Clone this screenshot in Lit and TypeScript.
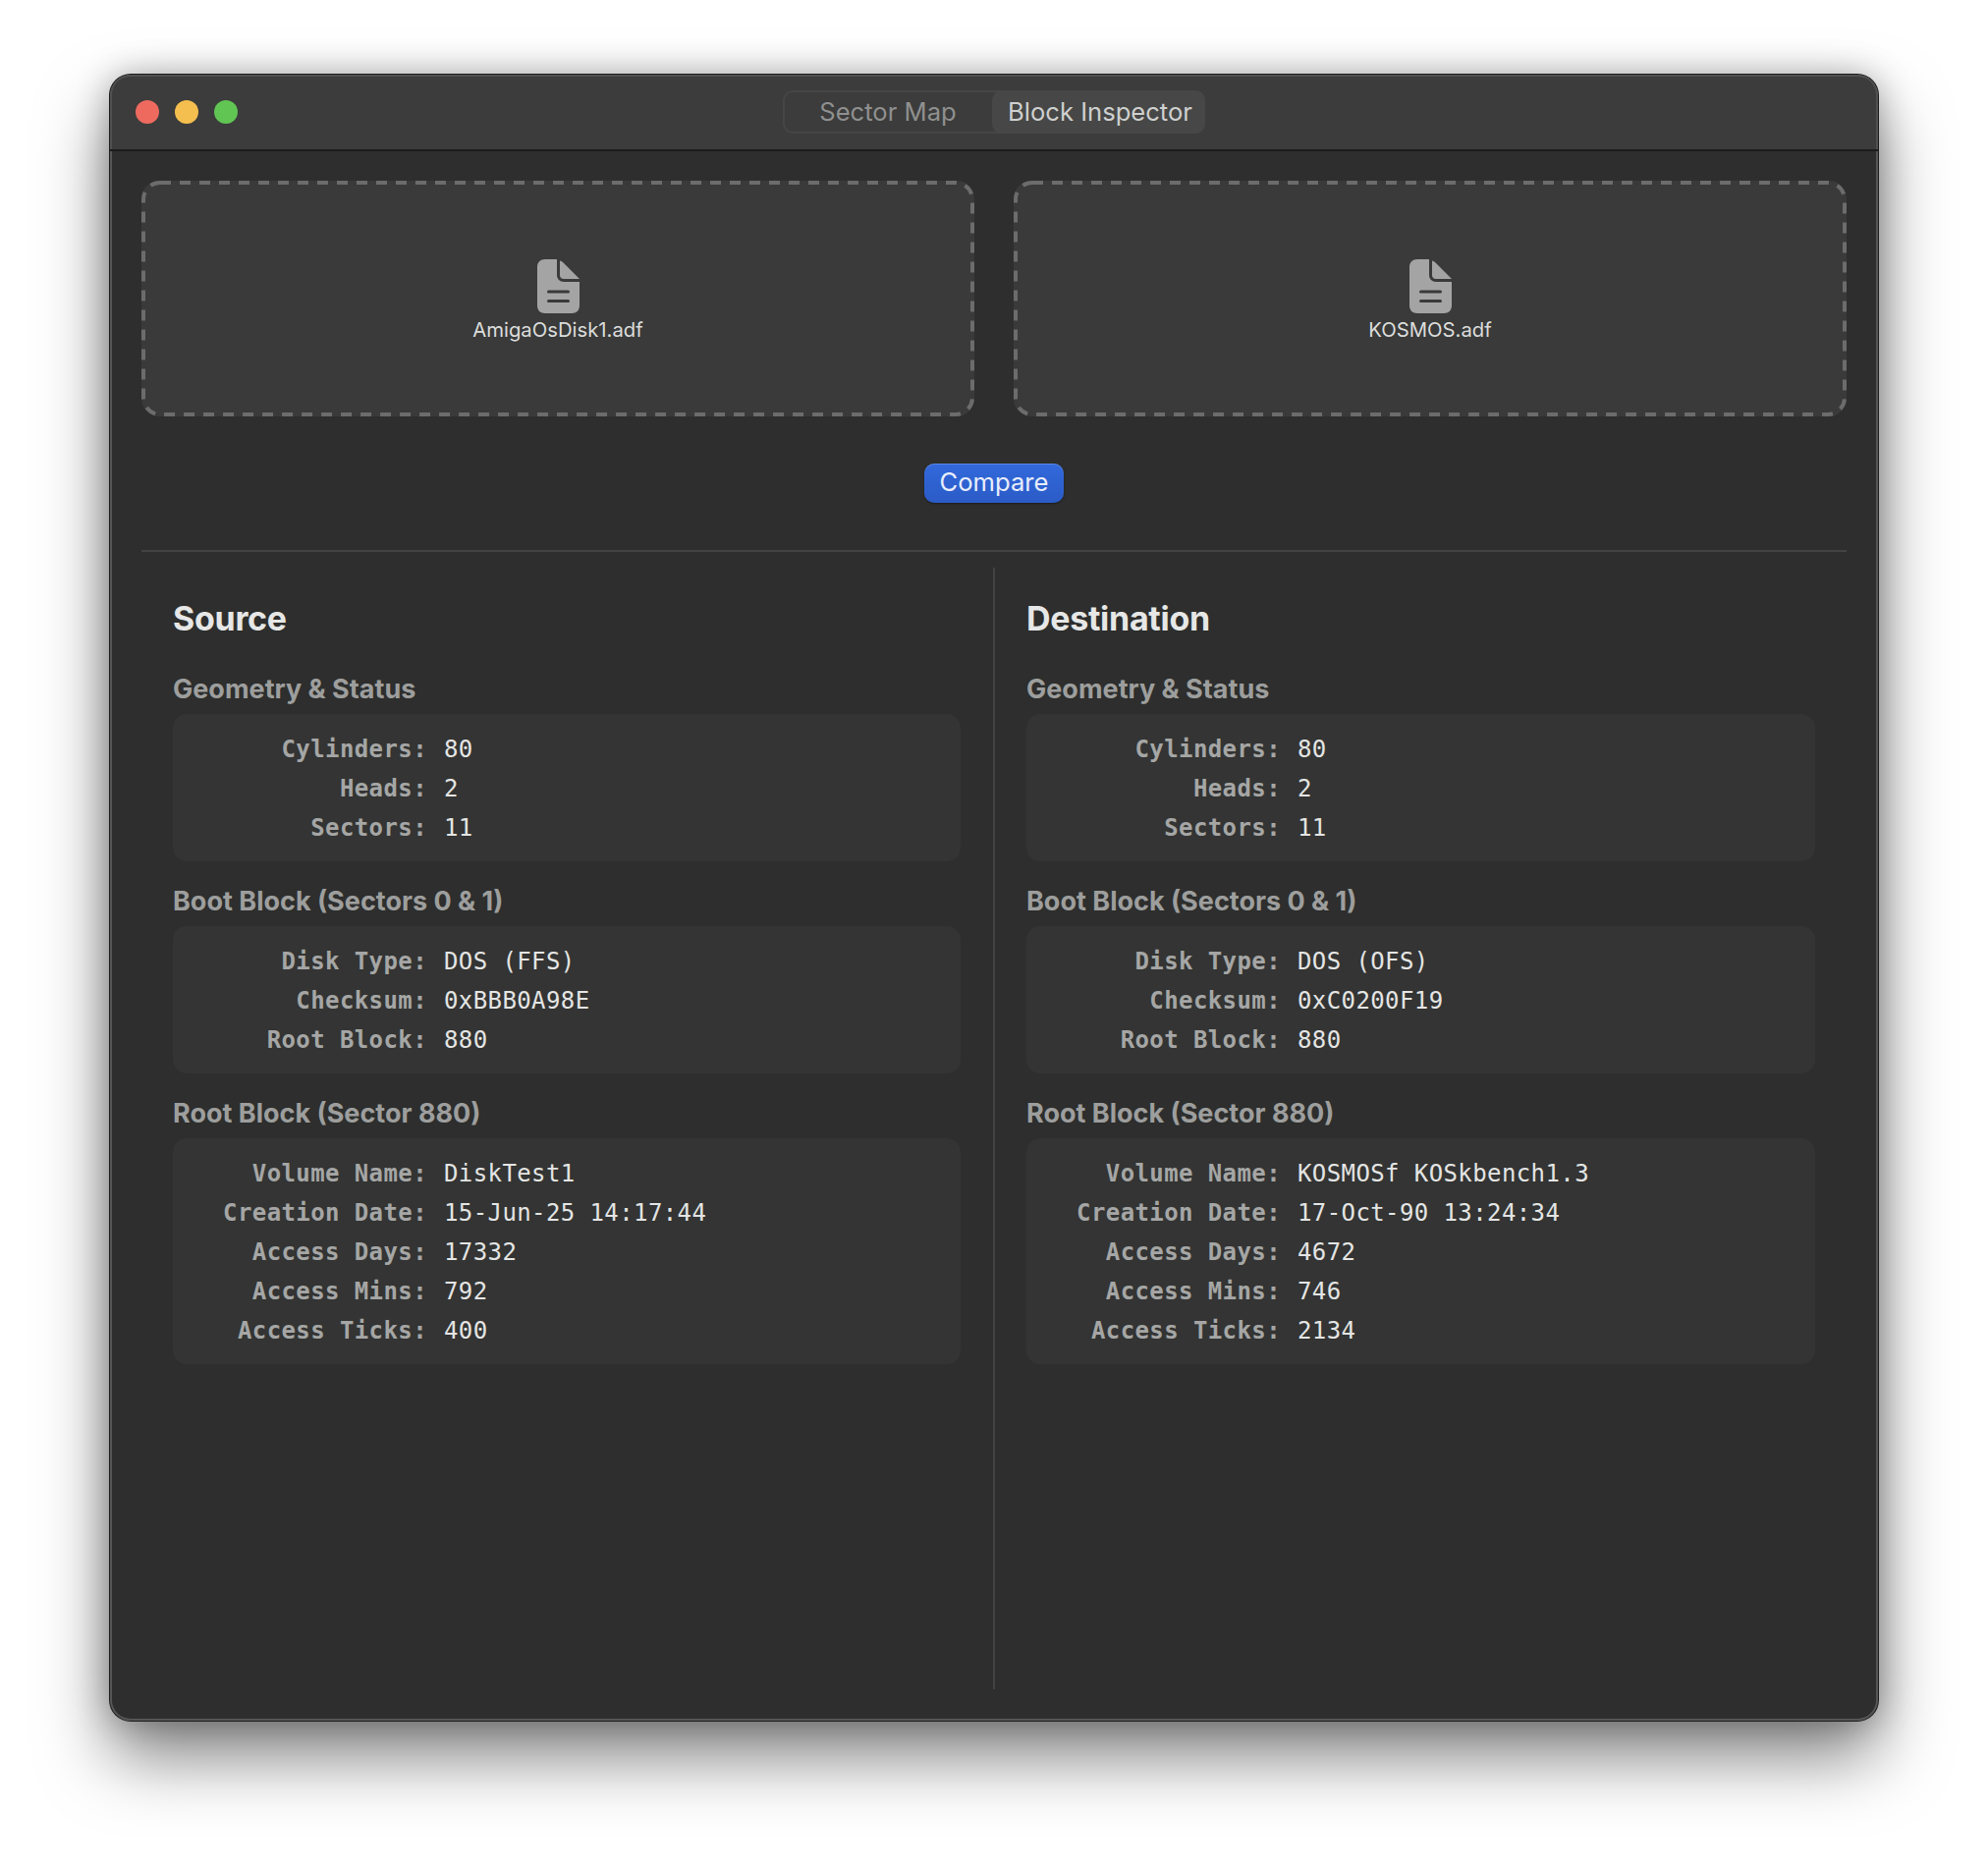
import {css, html, LitElement} from 'lit'
import {customElement} from 'lit/decorators.js'

type Row = [string, string]
type Section = {title: string; rows: Row[]}

const SOURCE: Section[] = [
  {title: 'Geometry & Status', rows: [['Cylinders:', '80'], ['Heads:', '2'], ['Sectors:', '11']]},
  {title: 'Boot Block (Sectors 0 & 1)', rows: [['Disk Type:', 'DOS (FFS)'], ['Checksum:', '0xBBB0A98E'], ['Root Block:', '880']]},
  {
    title: 'Root Block (Sector 880)',
    rows: [
      ['Volume Name:', 'DiskTest1'],
      ['Creation Date:', '15-Jun-25 14:17:44'],
      ['Access Days:', '17332'],
      ['Access Mins:', '792'],
      ['Access Ticks:', '400'],
    ],
  },
]

const DESTINATION: Section[] = [
  {title: 'Geometry & Status', rows: [['Cylinders:', '80'], ['Heads:', '2'], ['Sectors:', '11']]},
  {title: 'Boot Block (Sectors 0 & 1)', rows: [['Disk Type:', 'DOS (OFS)'], ['Checksum:', '0xC0200F19'], ['Root Block:', '880']]},
  {
    title: 'Root Block (Sector 880)',
    rows: [
      ['Volume Name:', 'KOSMOSf KOSkbench1.3'],
      ['Creation Date:', '17-Oct-90 13:24:34'],
      ['Access Days:', '4672'],
      ['Access Mins:', '746'],
      ['Access Ticks:', '2134'],
    ],
  },
]

const fileIcon = html`
  <svg class="file-icon" width="43" height="55" viewBox="0 0 43 55">
    <path fill="#a3a4a3" fill-rule="evenodd" d="M8 0H20V16C20 20 23 23 27 23H43V47C43 52 40 55 35 55H8C3 55 0 52 0 47V8C0 3 3 0 8 0ZM11.500 31.500A1.500 1.500 0 0 0 11.500 34.500H31.500A1.500 1.500 0 0 0 31.500 31.500ZM11.500 41A1.500 1.500 0 0 0 11.500 44H31.500A1.500 1.500 0 0 0 31.500 41Z" />
    <path fill="#a3a4a3" d="M23 1.500C24 1.500 25 2 26 3L41 18C42 19 42.500 19.500 43 20H27C24.500 20 23 18.500 23 16Z" />
  </svg>`

const dashes = html`
  <svg class="dashes"><rect class="dash-rect" x="2" y="2" rx="17" ry="17"></rect></svg>`

@customElement('app-root')
export class AppRoot extends LitElement {
  static styles = css`
    :host {
      background: #fff;
      box-sizing: border-box;
      display: block;
      font-family: Inter, "Liberation Sans", sans-serif;
      height: 1900px;
      overflow: hidden;
      padding: 76px 112px 0;
      width: 2024px;
    }

    .window {
      background: #2d2e2d;
      border-radius: 21px;
      box-shadow: 0 0 0 1px #1c1c1c, inset 0 0 0 2px #555655, 0 36px 70px rgba(0, 0, 0, 0.5), 0 0 34px rgba(0, 0, 0, 0.28);
      box-sizing: border-box;
      display: flex;
      flex-direction: column;
      height: 1676px;
      overflow: hidden;
      width: 1800px;
    }

    .titlebar {
      align-items: center;
      background: #3b3c3b;
      border-bottom: 2px solid #1b1c1b;
      border-radius: 21px 21px 0 0;
      box-shadow: inset 0 2px 0 #4f504f, inset 2px 0 0 #4f504f, inset -2px 0 0 #4f504f;
      display: grid;
      flex: none;
      grid-template-columns: 1fr auto 1fr;
      height: 76px;
      padding: 0 26px;
    }

    .lights {
      display: flex;
      gap: 16px;
    }

    .light {
      border-radius: 50%;
      height: 24px;
      width: 24px;
    }

    .red { background: #ee6a5f; }
    .yellow { background: #f5bf4f; }
    .green { background: #61c554; }

    .segments {
      border: 2px solid #454645;
      border-radius: 10px;
      box-sizing: border-box;
      display: grid;
      font-size: 25.6px;
      grid-template-columns: 1fr 1fr;
      height: 44px;
      width: 430px;
    }

    .segment {
      align-items: center;
      color: #8f908f;
      display: flex;
      justify-content: center;
      margin: -2px;
      padding: 0 3px 2px 0;
    }

    .segment.active {
      background: #464746;
      border-radius: 10px;
      color: #cfd0cf;
      padding: 0 0 2px 3px;
    }

    .body {
      display: flex;
      flex: 1;
      flex-direction: column;
      min-height: 0;
      padding: 30px 32px 32px;
    }

    .drops {
      display: grid;
      gap: 40px;
      grid-template-columns: 1fr 1fr;
    }

    .drop {
      align-items: center;
      background: #393a39;
      border-radius: 18px;
      box-sizing: border-box;
      display: flex;
      flex-direction: column;
      height: 240px;
      padding-top: 80px;
      position: relative;
    }

    .dashes {
      height: 100%;
      left: 0;
      position: absolute;
      top: 0;
      width: 100%;
    }

    .dash-rect {
      fill: none;
      height: calc(100% - 4px);
      stroke: #6b6c6b;
      stroke-dasharray: 11 9;
      stroke-width: 4;
      width: calc(100% - 4px);
    }

    .file-icon {
      display: block;
    }

    .file-name {
      color: #dcdddc;
      font-size: 20.3px;
      line-height: 26px;
      margin-top: 4px;
    }

    .actions {
      display: flex;
      justify-content: center;
      padding: 48px 0;
    }

    .compare {
      background: linear-gradient(#3269dc, #2b5bc6);
      border: 0;
      border-radius: 10px;
      box-shadow: inset 0 1px 0 rgba(255, 255, 255, 0.2), 0 1px 2px rgba(0, 0, 0, 0.4);
      color: #e8eefc;
      font: 25.6px Inter, "Liberation Sans", sans-serif;
      height: 40px;
      padding: 0 0 3px;
      width: 142px;
    }

    .rule {
      background: #424342;
      flex: none;
      height: 2px;
    }

    .columns {
      display: grid;
      flex: 1;
      grid-template-columns: 1fr 2px 1fr;
      margin-top: 16px;
      min-height: 0;
    }

    .vrule {
      background: #424342;
    }

    .column {
      padding: 32px 32px 0;
    }

    .column.left {
      padding-left: 32px;
      padding-right: 33px;
    }

    h2 {
      color: #e6e7e6;
      font-size: 34px;
      font-weight: 700;
      letter-spacing: -0.3px;
      line-height: 40px;
      margin: 0 0 37px;
    }

    h3 {
      color: #9d9e9d;
      font-size: 27px;
      font-weight: 700;
      line-height: 30px;
      margin: 0 0 10px;
    }

    .panel {
      background: #333433;
      border-radius: 14px;
      font-family: "DejaVu Sans Mono", "Liberation Mono", monospace;
      font-size: 24px;
      letter-spacing: 0.4px;
      margin-bottom: 26px;
      padding: 16px 16px 14px;
    }

    .row {
      display: grid;
      gap: 17px;
      grid-template-columns: 243px 1fr;
      height: 40px;
      line-height: 40px;
      white-space: pre;
    }

    .label {
      color: #a5a6a5;
      font-weight: 700;
      text-align: right;
    }

    .value {
      color: #e4e5e4;
    }
  `

  renderColumn(title: string, sections: Section[], side: string) {
    return html`
      <div class="column ${side}">
        <h2>${title}</h2>
        ${sections.map(section => html`
          <h3>${section.title}</h3>
          <div class="panel">
            ${section.rows.map(([label, value]) => html`
              <div class="row">
                <span class="label">${label}</span>
                <span class="value">${value}</span>
              </div>`)}
          </div>`)}
      </div>`
  }

  render() {
    return html`
      <div class="window">
        <div class="titlebar">
          <div class="lights">
            <div class="light red"></div>
            <div class="light yellow"></div>
            <div class="light green"></div>
          </div>
          <div class="segments">
            <div class="segment">Sector Map</div>
            <div class="segment active">Block Inspector</div>
          </div>
        </div>
        <div class="body">
          <div class="drops">
            <div class="drop">${dashes}${fileIcon}<div class="file-name">AmigaOsDisk1.adf</div></div>
            <div class="drop">${dashes}${fileIcon}<div class="file-name">KOSMOS.adf</div></div>
          </div>
          <div class="actions"><button class="compare">Compare</button></div>
          <div class="rule"></div>
          <div class="columns">
            ${this.renderColumn('Source', SOURCE, 'left')}
            <div class="vrule"></div>
            ${this.renderColumn('Destination', DESTINATION, 'right')}
          </div>
        </div>
      </div>`
  }
}
